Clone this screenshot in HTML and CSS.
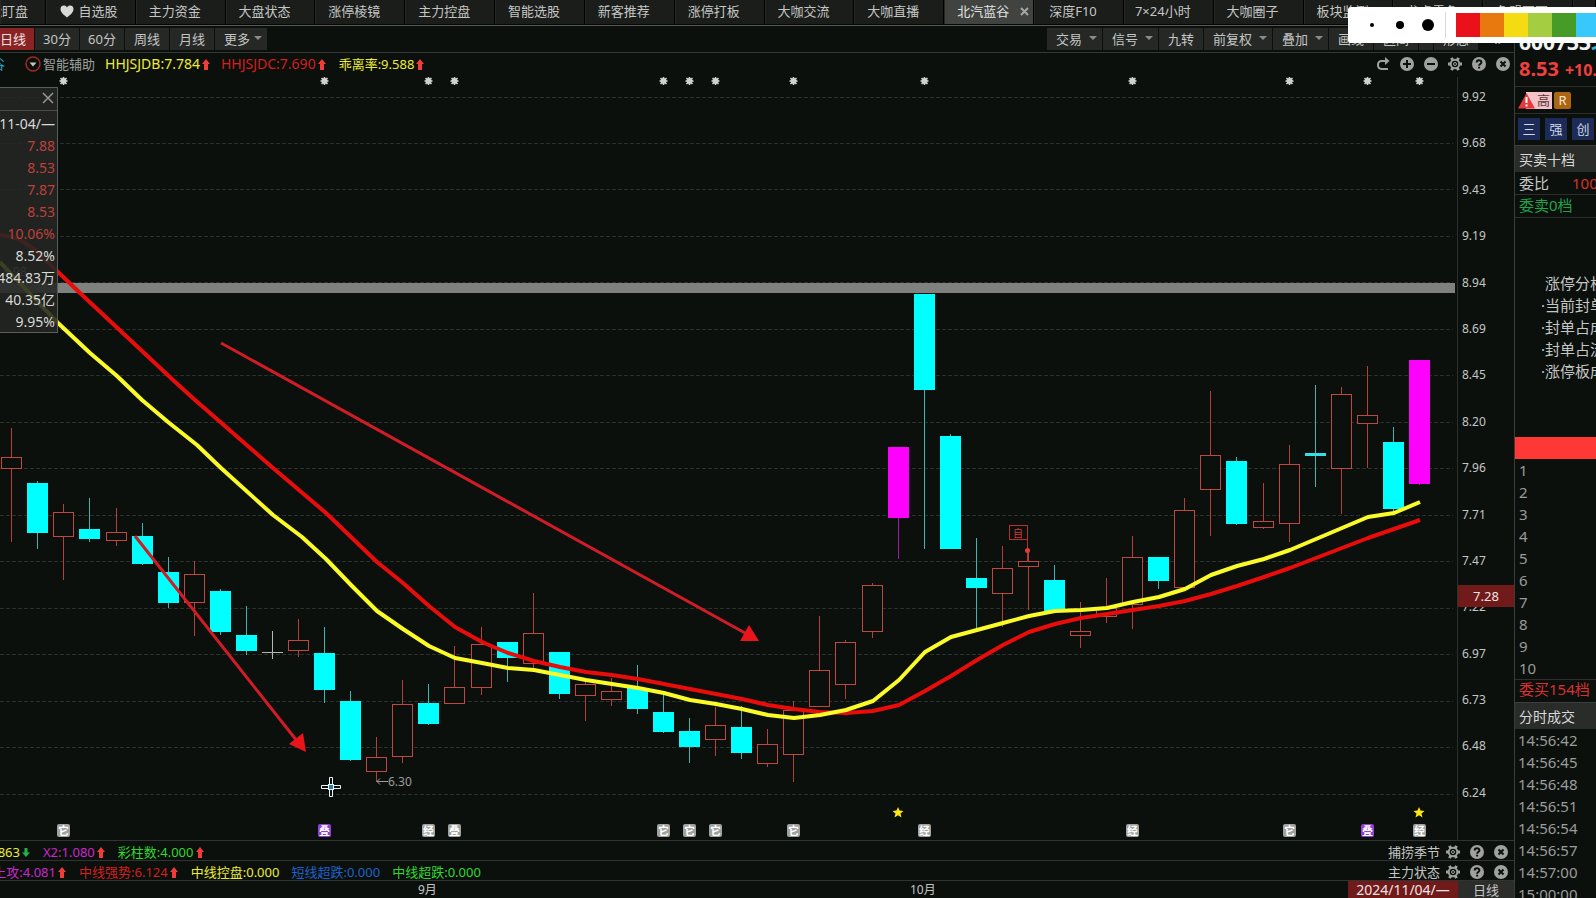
FILE: index.html
```html
<!DOCTYPE html>
<html lang="zh-CN">
<head>
<meta charset="utf-8">
<title>北汽蓝谷 - 日线</title>
<link rel="stylesheet" href="styles.css">
</head>
<body>
<svg class="defs" aria-hidden="true">
  <symbol id="up" viewBox="0 0 8 11"><path d="M4 0 8 5H6V11H2V5H0Z"/></symbol>
  <symbol id="down" viewBox="0 0 8 11"><path d="M4 10 0 5.500H2.500V1H5.500V5.500H8Z"/></symbol>
  <symbol id="gear" viewBox="0 0 14 14"><circle class="ring" cx="7" cy="7" r="4.300"/><path class="teeth" d="M0 7H2.500M11.500 7H14M3.500 .9 4.700 3.100M9.300 10.900 10.500 13.100M10.500 .9 9.300 3.100M4.700 10.900 3.500 13.100"/><circle class="hub" cx="7" cy="7" r="1.500"/></symbol>
  <symbol id="help" viewBox="0 0 14 14"><circle cx="7" cy="7" r="7"/><path class="cut" d="M4.700 5.400C4.700 2.500 9.400 2.500 9.400 5.300 9.400 7 7.100 7 7.100 8.700M7.100 9.800V11.500"/></symbol>
  <symbol id="close" viewBox="0 0 14 14"><circle cx="7" cy="7" r="7"/><path class="cut" d="M4.500 4.500 9.500 9.500M9.500 4.500 4.500 9.500"/></symbol>
  <symbol id="plus" viewBox="0 0 14 14"><circle cx="7" cy="7" r="7"/><path class="cut" d="M3 7H11M7 3V11"/></symbol>
  <symbol id="minus" viewBox="0 0 14 14"><circle cx="7" cy="7" r="7"/><path class="cut" d="M3 7H11"/></symbol>
  <symbol id="redo" viewBox="0 0 14 14"><path class="line" d="M11 4H5.500A3.500 3.500 0 0 0 2 7.500V8A4 4 0 0 0 5.500 12H12"/><path d="M9 0 13.500 4 9 8Z"/></symbol>
</svg>

<nav class="tabs">
  <button class="tab first">智能盯盘</button>
  <button class="tab"><svg class="heart" viewBox="0 0 14 13"><path d="M7 12.500C4 10 .5 7.500.5 4 .5 0 5.500-.5 7 2.500 8.500-.5 13.500 0 13.500 4 13.500 7.500 10 10 7 12.500Z"/></svg>自选股</button>
  <button class="tab">主力资金</button>
  <button class="tab">大盘状态</button>
  <button class="tab">涨停棱镜</button>
  <button class="tab">主力控盘</button>
  <button class="tab">智能选股</button>
  <button class="tab">新客推荐</button>
  <button class="tab">涨停打板</button>
  <button class="tab">大咖交流</button>
  <button class="tab">大咖直播</button>
  <button class="tab active">北汽蓝谷<svg class="tab-x" viewBox="0 0 9 9"><path d="M1 1 8 8M8 1 1 8"/></svg></button>
  <button class="tab">深度F10</button>
  <button class="tab">7×24小时</button>
  <button class="tab">大咖圈子</button>
  <button class="tab">板块监测</button>
  <button class="tab">龙虎雷鱼</button>
  <button class="tab">免盟圈圈</button>
  <span class="tab"></span>
</nav>

<main class="main">
  <section class="left">
    <div class="toolbar">
      <div class="group">
        <button class="tool on">日线</button>
        <button class="tool">30分</button>
        <button class="tool">60分</button>
        <button class="tool">周线</button>
        <button class="tool">月线</button>
        <button class="tool drop">更多</button>
      </div>
      <div class="group">
        <button class="tool drop">交易</button>
        <button class="tool drop">信号</button>
        <button class="tool">九转</button>
        <button class="tool wide drop">前复权</button>
        <button class="tool drop">叠加</button>
        <button class="tool">画线</button>
        <button class="tool">区间</button>
        <button class="tool slim"></button>
        <button class="tool">形态</button>
        <button class="more">«</button>
      </div>
    </div>

    <div class="indicator">
      <span class="crop name">北汽蓝谷</span>
      <svg class="toggle" viewBox="0 0 16 16"><circle cx="8" cy="8" r="7"/><path d="M4.500 6.500H11.500L8 10.500Z"/></svg>
      <span class="ind-title">智能辅助</span>
      <span class="item yellow latin">HHJSJDB:7.784<svg class="arrow"><use href="#up"/></svg></span>
      <span class="item red latin">HHJSJDC:7.690<svg class="arrow"><use href="#up"/></svg></span>
      <span class="item yellow">乖离率:9.588<svg class="arrow"><use href="#up"/></svg></span>
      <div class="icons">
        <button class="ib" aria-label="还原"><svg><use href="#redo"/></svg></button>
        <button class="ib" aria-label="放大"><svg><use href="#plus"/></svg></button>
        <button class="ib" aria-label="缩小"><svg><use href="#minus"/></svg></button>
        <button class="ib" aria-label="设置"><svg><use href="#gear"/></svg></button>
        <button class="ib" aria-label="帮助"><svg><use href="#help"/></svg></button>
        <button class="ib" aria-label="关闭"><svg><use href="#close"/></svg></button>
      </div>
    </div>

    <div class="chart">
      <svg class="plot" viewBox="0 77 1457 763" preserveAspectRatio="xMaxYMin meet">
        <g id="grid"></g>
        <rect class="band" x="0" y="283" width="1455" height="10"/>
        <g id="candles" shape-rendering="crispEdges"></g>
        <g class="signal"><rect x="1009.500" y="525.500" width="18" height="14"/><path d="M1027.500 540V562"/><circle cx="1027.500" cy="550.500" r="2.500"/><text x="1018" y="537">自</text></g>
        <polyline class="ma slow" points="0,235 12,237 22,241 35,250 58,272 80,293 173,380 195,400 273,468 326,513 377,562 403,583 429,606 455,627 482,642 508,653 534,661 560,667 586,672 612,675 638,679 664,684 690,689 716,694 742,699 768,705 794,709 820,712 846,713 873,711 899,705 925,691 951,676 977,660 1003,645 1029,632 1055,624 1081,618 1107,614 1133,610 1159,606 1185,601 1211,594 1237,586 1264,577 1290,568 1316,558 1342,548 1368,538 1394,529 1420,520"/>
        <polyline class="ma fast" points="0,262 33,297 58,323 90,353 117,376 142,400 168,422 197,445 221,468 273,515 302,537 326,559 351,585 377,611 403,629 429,646 455,658 482,663 508,668 534,670 560,675 586,680 612,684 638,688 664,693 690,700 716,704 742,709 768,715 794,718 820,715 846,710 873,701 899,680 925,652 951,637 977,630 1003,623 1029,616 1055,611 1081,610 1107,608 1133,602 1159,597 1185,589 1211,575 1237,566 1264,559 1290,550 1316,539 1342,528 1368,517 1394,513 1420,502"/>
        <g class="drawn"><path d="M221 343 745 633M135 536 297 741"/><path class="head" d="M759 641 749 625 740 641ZM306 752 303 733 289 744Z"/></g>
        <g class="low"><path d="M377 781.500H388M380 778.500 377 781.500 380 784.500"/><text x="388" y="786">6.30</text><text x="3" y="276">8.98</text></g>
        <g id="marks"></g>
        <g class="cursor"><path d="M329.500 777.500H332.500V785.500H340.500V788.500H332.500V796.500H329.500V788.500H321.500V785.500H329.500Z"/><rect x="328.500" y="784.500" width="5" height="5"/></g>
      </svg>
      <div class="axis">
        <span>9.92</span><span>9.68</span><span>9.43</span><span>9.19</span><span>8.94</span><span>8.69</span><span>8.45</span><span>8.20</span><span>7.96</span><span>7.71</span><span>7.47</span><span>7.22</span><span>6.97</span><span>6.73</span><span>6.48</span><span>6.24</span>
        <div class="price-tag">7.28</div>
      </div>
      <aside class="popup">
        <header><button class="pop-x" aria-label="关闭"><svg viewBox="0 0 12 12"><path d="M1 1 11 11M11 1 1 11"/></svg></button></header>
        <p>2024-11-04/—</p><p class="r">7.88</p><p class="r">8.53</p><p class="r">7.87</p><p class="r">8.53</p><p class="r">10.06%</p><p>8.52%</p><p>484.83万</p><p>40.35亿</p><p>9.95%</p>
      </aside>
    </div>

    <div class="sub">
      <span class="crop c20 yellow">X1:0.863</span><svg class="arrow green-fill"><use href="#down"/></svg>
      <span class="item purple">X2:1.080<svg class="arrow"><use href="#up"/></svg></span>
      <span class="item green">彩柱数:4.000<svg class="arrow"><use href="#up"/></svg></span>
      <div class="icons sub-icons"><span>捕捞季节</span>
        <button class="ib" aria-label="设置"><svg><use href="#gear"/></svg></button>
        <button class="ib" aria-label="帮助"><svg><use href="#help"/></svg></button>
        <button class="ib" aria-label="关闭"><svg><use href="#close"/></svg></button></div>
    </div>
    <div class="sub">
      <span class="crop c56 purple">上攻:4.081</span><svg class="arrow"><use href="#up"/></svg>
      <span class="item red">中线强势:6.124<svg class="arrow"><use href="#up"/></svg></span>
      <span class="item yellow">中线控盘:0.000</span>
      <span class="item blue">短线超跌:0.000</span>
      <span class="item green">中线超跌:0.000</span>
      <div class="icons sub-icons"><span>主力状态</span>
        <button class="ib" aria-label="设置"><svg><use href="#gear"/></svg></button>
        <button class="ib" aria-label="帮助"><svg><use href="#help"/></svg></button>
        <button class="ib" aria-label="关闭"><svg><use href="#close"/></svg></button></div>
    </div>
    <div class="dates">
      <div class="months"><span>9月</span><span>10月</span></div>
      <span class="date">2024/11/04/—</span><span class="period">日线</span>
    </div>
  </section>

  <aside class="side">
    <div class="quote">
      <div class="code">600733<span>北汽蓝谷</span></div>
      <div class="price">8.53<span>+10.06%</span></div>
    </div>
    <div class="badges"><svg class="warn" viewBox="0 0 17 17"><path d="M8.500 1 17 16.500H0Z"/><path class="bang" d="M8.500 5V11M8.500 12.500V14.500"/></svg><span class="risk">高</span><span class="rong">R</span></div>
    <div class="chips"><button>三</button><button>强</button><button>创</button></div>
    <h2>买卖十档</h2>
    <div class="ratio"><span>委比</span><span class="r">100.00%</span></div>
    <div class="sell">委卖0档</div>
    <ul class="analysis"><li>涨停分析</li><li>·当前封单</li><li>·封单占成</li><li>·封单占流</li><li>·涨停板成</li></ul>
    <div class="redbar"></div>
    <ol class="levels"><li>1</li><li>2</li><li>3</li><li>4</li><li>5</li><li>6</li><li>7</li><li>8</li><li>9</li><li>10</li></ol>
    <div class="buy">委买154档</div>
    <h2>分时成交</h2>
    <ol class="ticks"><li>14:56:42</li><li>14:56:45</li><li>14:56:48</li><li>14:56:51</li><li>14:56:54</li><li>14:56:57</li><li>14:57:00</li><li>15:00:00</li></ol>
  </aside>
</main>

<div class="palette">
  <span class="dot s"></span><span class="dot m"></span><span class="dot l"></span><span class="sep"></span>
  <span class="sw sw1"></span><span class="sw sw2"></span><span class="sw sw3"></span><span class="sw sw4"></span><span class="sw sw5"></span><span class="sw sw6"></span>
</div>
<script src="chart.js"></script>
</body>
</html>
```
FILE: styles.css
```css
* { box-sizing: border-box; }
body {
  margin: 0; height: 100vh; overflow: hidden; display: flex; flex-direction: column; position: relative;
  background: #0c100d; color: #c4c6c4;
  font: 13px/20px "Noto Sans", "Noto Sans CJK SC", sans-serif; white-space: nowrap;
}
button { font: inherit; color: inherit; background: none; border: 0; padding: 0; margin: 0; white-space: nowrap; }
ul, ol { list-style: none; margin: 0; padding: 0; }
p, h2 { margin: 0; font-weight: normal; }
.defs { position: absolute; width: 0; height: 0; }

.tabs { flex: none; display: grid; grid-template-columns: 46px repeat(17, minmax(0, 1fr)) 23px; height: 26px; padding-bottom: 1px; border-bottom: 1px solid #555855; background: #050605; }
.tab { display: flex; align-items: center; justify-content: center; padding: 0 12px 2px 0; background: #1b1d1b; border-right: 1px solid #000; border-left: 1px solid #262826; overflow: hidden; }
.tab.first { justify-content: flex-end; padding-right: 17px; }
.tab.active { background: #414341; color: #e2e4e2; padding: 0 4px 2px 12px; justify-content: space-between; }
.heart { width: 14px; height: 13px; fill: #d8dad8; margin: 0 4px 0 8px; }
.tab-x { width: 9px; height: 9px; stroke: #a5a7a5; stroke-width: 2; }

.main { flex: 1; min-height: 0; display: flex; }
.left { flex: 1; min-width: 0; display: flex; flex-direction: column; }
.toolbar { flex: none; height: 27px; padding: 2px 0; display: flex; justify-content: space-between; border-bottom: 1px solid #343734; }
.group { display: flex; gap: 1px; }
.tool { width: 44px; height: 22px; background: #262826; display: flex; align-items: center; justify-content: center; padding-bottom: 1px; }
.tool.on { width: 34px; background: #8a2424; color: #f2e4e4; justify-content: flex-end; padding-right: 8px; }
.tool.drop { width: 55px; justify-content: space-between; padding: 0 5px 1px 9px; }
.tool.wide { width: 68px; }
.group:first-child .drop { width: 52px; }
.tool.slim { width: 14px; }
.drop::after { content: ""; border: 4px solid transparent; border-top-color: #8b8d8b; margin-top: 3px; }
.more { width: 35px; font-size: 16px; }

.indicator { flex: none; height: 24px; display: flex; align-items: center; padding: 0 4px 2px 0; }
.crop { display: flex; justify-content: flex-end; overflow: hidden; }
.name { width: 5px; color: #28a8c8; margin-right: 20px; }
.toggle { width: 16px; height: 16px; margin-right: 2px; }
.toggle circle { fill: none; stroke: #a02826; stroke-width: 1.5; }
.toggle path { fill: #c4c6c4; }
.ind-title { color: #9ea09e; }
.item { display: flex; align-items: center; margin-left: 12px; }
.latin { font-size: 14px; margin-left: 10px; }
.arrow { width: 8px; height: 11px; fill: #ef3d38; margin: 0 1px 0 2px; flex: none; }
.green-fill { fill: #22b24a; }
.yellow { color: #ecec36; }
.red { color: #d41f1c; }
.purple { color: #c928cc; }
.green { color: #2fd831; }
.blue { color: #1f62cc; }
.icons { margin-left: auto; display: flex; align-items: center; gap: 10px; }
.ib { width: 14px; height: 14px; display: flex; }
.ib svg { width: 14px; height: 14px; fill: #a0a2a0; }
.cut { fill: none; stroke: #0c100d; stroke-width: 2; }
.line { fill: none; stroke: #a0a2a0; stroke-width: 2; }
.ring { fill: none; stroke: #a0a2a0; stroke-width: 2; }
.teeth { stroke: #a0a2a0; stroke-width: 3; }
.hub { fill: none; stroke: #a0a2a0; stroke-width: 1; }

.chart { flex: 1; min-height: 0; display: flex; position: relative; }
.plot { flex: 1; min-width: 0; height: 100%; }
.grid { stroke: #2a302b; stroke-dasharray: 4 2; }
.band { fill: #7f817e; }
.cyan { fill: #00ffff; }
.wick-cyan { fill: #3fb5b0; }
.flat { fill: #35dde4; }
.magenta { fill: #ff00ff; }
.wick-magenta { fill: #a516a8; }
.wick-up { fill: #b5403b; }
.up { fill: #0c100d; stroke: #c04843; }
.doji { fill: #b5b7b4; }
.ma { fill: none; stroke-width: 4; stroke-linejoin: round; }
.slow { stroke: #e80c0a; }
.fast { stroke: #fbfb28; }
.drawn { fill: none; stroke: #d01d25; stroke-width: 3; }
.head { fill: #e9151b; stroke: none; }
.low { stroke: #9c9c98; fill: none; }
.low text { stroke: none; fill: #9c9c98; font-size: 12px; }
.signal { fill: none; stroke: #b5332f; }
.signal circle { fill: #e03c38; stroke: none; }
.signal text { fill: #cc3a36; stroke: none; font-size: 10px; text-anchor: middle; }
.burst { stroke: #d0d2d0; stroke-width: 1.5; }
.burst-core { fill: #d0d2d0; }
.tag { fill: #9fa19f; }
.tag.violet { fill: #9141cf; }
.tag-text { fill: #fff; font-size: 11px; font-weight: bold; text-anchor: middle; }
.star { fill: #ffe714; }
.cursor { fill: #0c100d; stroke: #eef8ff; }
.cursor rect { fill: #2a86a8; }

.axis { width: 57px; flex: none; border-left: 1px solid #2c2f2c; padding: 12px 0 39px 4px; display: flex; flex-direction: column; justify-content: space-between; position: relative; font-size: 12px; line-height: 16px; }
.price-tag { position: absolute; left: 0; top: 508px; width: 100%; height: 22px; line-height: 22px; background: #701a19; color: #eee2e2; font-size: 13px; text-align: center; }
.popup { position: absolute; left: 0; top: 10px; width: 58px; height: 246px; background: rgba(35, 37, 35, .88); border: 1px solid #5a5c5a; border-left: 0; color: #d8dad8; }
.popup header { height: 23px; border-bottom: 1px solid #4a4c4a; margin-bottom: 2px; display: flex; justify-content: flex-end; align-items: center; padding: 0 3px 2px 0; }
.pop-x { width: 12px; height: 12px; display: flex; }
.pop-x svg { width: 12px; height: 12px; stroke: #969896; stroke-width: 1.5; }
.popup p { height: 22px; line-height: 22px; font-size: 14px; padding-right: 2px; display: flex; justify-content: flex-end; }
.popup .r { color: #bf403c; }

.sub { flex: none; height: 20px; border-top: 1px solid #303330; display: flex; align-items: center; padding-right: 6px; padding-top: 3px; }
.c20 { width: 20px; }
.c56 { width: 56px; }
.sub-icons span { margin-right: -4px; }
.dates { flex: none; height: 18px; border-top: 1px solid #303330; display: flex; line-height: 18px; }
.months { flex: 1; display: flex; padding-left: 418px; font-size: 12px; }
.months span { width: 492px; }
.months span + span { width: auto; }
.date { width: 110px; background: #701a19; color: #eee2e2; text-align: center; font-size: 14px; }
.period { width: 56px; background: #2b2d2b; text-align: center; }

.side { flex: none; width: 82px; border-left: 1px solid #3a3d3a; overflow: hidden; font-size: 15px; line-height: 22px; }
.quote { height: 61px; padding: 0 0 0 4px; border-bottom: 1px solid #2c2f2c; font-weight: bold; }
.code { font-size: 21px; line-height: 32px; color: #f2f4f2; }
.code span { color: #28b8e8; }
.price { font-size: 20px; line-height: 22px; color: #f0403d; }
.price span { font-size: 16px; margin-left: 6px; }
.badges { height: 27px; padding: 5px 0 0 3px; border-bottom: 1px solid #2c2f2c; display: flex; }
.badges span { width: 17px; height: 17px; font-size: 13px; line-height: 17px; text-align: center; }
.warn { width: 17px; height: 17px; background: linear-gradient(90deg, transparent 50%, #f3c3c8 50%); fill: #e8383a; }
.bang { stroke: #fff; stroke-width: 2; }
.risk { background: #f3c3c8; color: #55373a; }
.badges .rong { background: #ad6512; color: #f5ead8; margin-left: 2px; border-radius: 2px; }
.chips { height: 31px; padding: 4px 0 0 3px; display: flex; gap: 5px; }
.chips button { flex: none; width: 22px; height: 22px; background: #1c2b57; color: #d0d8e8; font-size: 13px; line-height: 22px; }
.side h2 { height: 27px; background: #2a2c2a; border-top: 1px solid #3c3f3c; padding-left: 4px; font-size: 14px; line-height: 28px; color: #d8dad8; }
.ratio { height: 23px; display: flex; gap: 23px; padding-left: 4px; border-bottom: 1px solid #2c2f2c; }
.side .r { color: #d8322f; }
.sell { height: 23px; padding-left: 4px; line-height: 20px; color: #1fa34a; border-bottom: 1px solid #2c2f2c; }
.analysis { height: 219px; padding-top: 54px; }
.analysis li { padding-left: 26px; }
.analysis li:first-child { padding-left: 30px; }
.redbar { height: 22px; background: #ff3836; }
.levels { padding-left: 4px; color: #9a9c9a; }
.buy { height: 23px; padding-left: 4px; line-height: 18px; color: #d8322f; border-top: 1px solid #2c2f2c; }
.ticks { padding-left: 3px; color: #9a9c9a; }

.palette { position: absolute; right: 0; top: 7px; width: 248px; height: 36px; background: #fff; border-radius: 3px 0 0 3px; display: flex; align-items: center; overflow: hidden; padding-left: 22px; }
.dot { flex: none; border-radius: 50%; background: #000; }
.dot.s { width: 4px; height: 4px; margin-right: 22px; }
.dot.m { width: 8px; height: 8px; margin-right: 18px; }
.dot.l { width: 12px; height: 12px; }
.sep { flex: none; width: 1px; height: 26px; background: #d8d8d8; margin: 0 10px 0 11px; }
.sw { flex: none; width: 24px; height: 24px; }
.sw1 { background: #ea111b; }
.sw2 { background: #e8790e; }
.sw3 { background: #f5dc12; }
.sw4 { background: #a5cd42; }
.sw5 { background: #479b27; }
.sw6 { background: #38c8fc; }
```
FILE: chart.js
```js
const NS = "http://www.w3.org/2000/svg";
function add(parent, tag, attrs, text) {
  const el = document.createElementNS(NS, tag);
  for (const k in attrs) el.setAttribute(k, attrs[k]);
  if (text) el.textContent = text;
  parent.appendChild(el);
}

const grid = document.getElementById("grid");
[97, 143, 189, 236, 282, 329, 375, 422, 468, 515, 561, 608, 654, 701, 747, 794].forEach(y =>
  add(grid, "line", { class: "grid", x1: 0, x2: 1453, y1: y + 0.5, y2: y + 0.5 }));

// x, high, body top, body bottom, low, kind
const rows = [
  [11,428,457,469,542,"r"],[37,481,483,533,549,"c"],[63,504,512,537,580,"r"],[89,498,529,539,542,"c"],
  [116,508,532,541,546,"r"],[142,523,536,564,565,"c"],[168,557,572,603,608,"c"],[194,561,574,603,636,"r"],
  [220,589,591,632,635,"c"],[246,606,635,651,655,"c"],[272,631,652,653,659,"d"],[298,619,640,651,657,"r"],
  [324,627,653,690,703,"c"],[350,691,701,760,761,"c"],[376,737,757,772,782,"r"],[402,680,704,757,763,"r"],
  [428,684,703,724,725,"c"],[454,646,687,704,704,"r"],[481,627,644,688,695,"r"],[507,642,642,658,682,"c"],
  [533,593,633,664,669,"r"],[559,652,652,694,699,"c"],[585,681,684,696,721,"r"],[611,678,691,700,706,"r"],
  [637,665,688,709,714,"c"],[663,695,712,732,733,"c"],[689,718,731,747,763,"c"],[715,707,725,740,756,"r"],
  [741,706,727,753,759,"c"],[767,729,744,764,767,"r"],[793,701,710,755,782,"r"],[819,616,670,707,707,"r"],
  [845,640,642,685,699,"r"],[872,583,585,632,638,"r"],[898,447,447,518,559,"m"],[924,294,294,390,549,"c"],
  [950,434,436,549,549,"c"],[976,538,578,588,628,"c"],[1002,546,568,594,627,"r"],[1028,550,561,567,610,"r"],
  [1054,565,580,611,611,"c"],[1080,602,631,636,648,"r"],[1106,578,608,617,623,"r"],[1132,536,557,605,629,"r"],
  [1158,557,557,581,589,"c"],[1184,498,510,588,588,"r"],[1210,391,455,490,536,"r"],[1236,457,461,524,525,"c"],
  [1263,483,521,528,529,"r"],[1289,445,464,524,542,"r"],[1315,385,453,456,487,"f"],[1341,387,394,469,514,"r"],
  [1367,366,415,424,468,"r"],[1393,427,442,509,511,"c"],[1419,360,360,484,485,"m"]
];
const body = { c: "cyan", m: "magenta", d: "doji", f: "flat" };
const wick = { c: "wick-cyan", f: "wick-cyan", m: "wick-magenta", r: "wick-up", d: "doji" };
const candles = document.getElementById("candles");
rows.forEach(([x, hi, top, bot, lo, k]) => {
  add(candles, "rect", { class: wick[k], x: x, y: hi, width: 1, height: lo - hi });
  if (k === "r") add(candles, "rect", { class: "up", x: x - 9.5, y: top + 0.5, width: 20, height: bot - top - 1 });
  else add(candles, "rect", { class: body[k], x: x - 10, y: top, width: 21, height: bot - top });
});

const marks = document.getElementById("marks");
[[63,"它"],[324,"叠",1],[428,"经"],[454,"叠"],[663,"它"],[689,"它"],[715,"它"],[793,"它"],[924,"经"],[1132,"经"],[1289,"它"],[1367,"叠",1],[1419,"经"]]
  .forEach(([x, ch, violet]) => {
    const c = x + 0.5;
    add(marks, "circle", { class: "burst-core", cx: c, cy: 81, r: 3 });
    add(marks, "path", { class: "burst", d: `M${c - 4} 81h8M${c} 77v8M${c - 3} 78l6 6M${c + 3} 78l-6 6` });
    add(marks, "rect", { class: violet ? "tag violet" : "tag", x: x - 6, y: 824, width: 13, height: 13, rx: 2 });
    add(marks, "text", { class: "tag-text", x: c, y: 835 }, ch);
  });
[898, 1419].forEach(x =>
  add(marks, "path", { class: "star", d: `M${x} 807l1.500 3.600 4 .3-3 2.600 1 3.900-3.500-2.100-3.500 2.100 1-3.900-3-2.600 4-.3z` }));
```
